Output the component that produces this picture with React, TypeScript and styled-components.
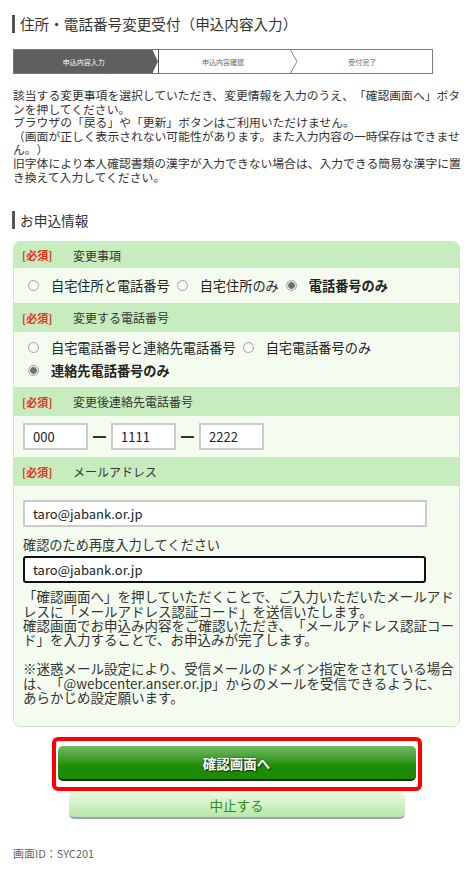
import React from "react";
import styled, { createGlobalStyle } from "styled-components";

const FONT = `"Noto Sans CJK JP", "Noto Sans", sans-serif`;

const GlobalStyle = createGlobalStyle`
  html, body {
    margin: 0;
    padding: 0;
    background: #fff;
  }
  body {
    font-family: ${FONT};
    color: #333;
    text-spacing-trim: space-all;
  }
`;

const Page = styled.div`
  width: 472px;
  box-sizing: border-box;
  padding: 14px 12px 20px 13px;
`;

const Heading = styled.h1<{ $size: number }>`
  margin: 0;
  display: flex;
  align-items: center;
  height: 20px;
  font-size: ${(p) => p.$size}px;
  font-weight: normal;
  color: #333;
  line-height: 20px;

  &::before {
    content: "";
    width: 3px;
    height: 18px;
    margin: 0 5px 0 -1px;
    background: #555;
  }
`;

const Stepper = styled.ol`
  display: flex;
  margin: 15px 0 0;
  padding: 0;
  list-style: none;
  width: 420px;
  height: 25px;
  box-sizing: border-box;
  border: 1px solid #7a7a7a;
`;

const Step = styled.li<{ $active?: boolean }>`
  flex: 1;
  position: relative;
  display: flex;
  align-items: center;
  justify-content: center;
  font-size: 7px;
  color: ${(p) => (p.$active ? "#fff" : "#666")};
  background: ${(p) => (p.$active ? "#5f5f5f" : "#fff")};
`;

const Chevron = styled.svg`
  position: absolute;
  right: -6px;
  top: -1px;
  z-index: 1;
`;

const Intro = styled.div`
  margin: 14px -4px 0 0;
  font-size: 11.8px;
  line-height: 13.6px;
  color: #333;

  p {
    margin: 0;
  }
`;

const SectionHeading = styled(Heading)`
  margin-top: 27px;
`;

const FormBox = styled.div`
  margin-top: 11px;
  border: 1px solid #c5eabd;
  border-radius: 7px;
  overflow: hidden;
  background: #f4fcf0;
`;

const FieldHeader = styled.div<{ $h: number }>`
  display: flex;
  align-items: center;
  height: ${(p) => p.$h}px;
  padding-left: 8px;
  background: #c7edbf;
  font-size: 12px;
  color: #333;
`;

const Required = styled.span`
  width: 51px;
  color: #e4341a;
  font-weight: bold;
  font-size: 11px;
`;

const FieldBody = styled.div<{ $pad: string }>`
  padding: ${(p) => p.$pad};
  background: #f4fcf0;
`;

const RadioGroup = styled.div`
  display: flex;
  flex-wrap: wrap;
  column-gap: 7px;
`;

const RadioOption = styled.label<{ $checked?: boolean }>`
  display: flex;
  align-items: center;
  gap: 12px;
  height: 23px;
  font-size: 13.2px;
  font-weight: ${(p) => (p.$checked ? "bold" : "normal")};
  color: #222;
`;

const Radio = styled.span<{ $checked?: boolean }>`
  width: 11px;
  height: 11px;
  box-sizing: border-box;
  border-radius: 50%;
  border: 1px solid #a5a5a5;
  background: ${(p) =>
    p.$checked
      ? "radial-gradient(circle, #707070 0 3px, #e4e4e4 3.6px)"
      : "linear-gradient(#f4f4f4, #fff)"};
`;

const PhoneRow = styled.div`
  display: flex;
  align-items: center;
  gap: 5px;
`;

const TextInput = styled.input<{ $w: number; $focus?: boolean }>`
  width: ${(p) => p.$w}px;
  height: 27px;
  box-sizing: border-box;
  padding: 0 0 0 8px;
  border: 2px solid ${(p) => (p.$focus ? "#111" : "#cbcbcb")};
  border-radius: ${(p) => (p.$focus ? "3px" : "0")};
  background: #fff;
  font-family: ${FONT};
  font-size: 13px;
  color: #222;
  outline: none;
`;

const Dash = styled.span`
  width: 13px;
  height: 2px;
  background: #333;
`;

const SubLabel = styled.div`
  margin: 9px 0 2px;
  font-size: 13.2px;
  line-height: 18px;
  color: #333;
`;

const Notes = styled.div`
  margin-top: 6px;
  font-size: 13.5px;
  line-height: 14.4px;
  color: #333;

  p {
    margin: 0;
  }
`;

const Actions = styled.div`
  display: flex;
  flex-direction: column;
  align-items: center;
  margin-top: 10px;
`;

const Highlight = styled.div`
  padding: 5px 2px 6px;
  border: 4px solid #ff0000;
  border-radius: 6px;
`;

const PrimaryButton = styled.button`
  display: block;
  width: 358px;
  height: 35px;
  border: 0;
  border-bottom: 2px solid #0b3300;
  border-radius: 5px;
  background: linear-gradient(#72b967 0%, #3f9d2a 40%, #1f8d07 60%, #1c8a03 100%);
  color: #fff;
  font-family: ${FONT};
  font-size: 13.5px;
  font-weight: bold;
  text-shadow: 0 0 2px #124500, 1px 1px 1px #0c3000;
  cursor: pointer;
`;

const SecondaryButton = styled.button`
  display: block;
  width: 336px;
  height: 27px;
  margin-top: 1px;
  border: 0;
  border-bottom: 2px solid #9aa6b8;
  border-radius: 5px;
  background: linear-gradient(#e9f9e4, #c6edb9 70%, #b8e7aa);
  color: #2d8a20;
  font-family: ${FONT};
  font-size: 13.5px;
  cursor: pointer;
`;

const ScreenId = styled.div`
  margin-top: 26px;
  font-size: 11px;
  color: #666;
`;

const App: React.FC = () => {
  return (
    <Page>
      <GlobalStyle />
      <Heading $size={14.6}>住所・電話番号変更受付（申込内容入力）</Heading>

      <Stepper>
        <Step $active>
          申込内容入力
          <Chevron width="7" height="25" viewBox="0 0 7 25">
            <polygon points="0,0 6,12.5 0,25" fill="#5f5f5f" />
            <line x1="6.5" y1="0" x2="6.5" y2="25" stroke="#555" strokeWidth="1" />
          </Chevron>
        </Step>
        <Step>
          申込内容確認
          <Chevron width="9" height="25" viewBox="0 0 9 25">
            <polyline points="0,0 7,12.5 0,25" fill="#fff" stroke="#888" strokeWidth="1" />
          </Chevron>
        </Step>
        <Step>受付完了</Step>
      </Stepper>

      <Intro>
        <p>
          該当する変更事項を選択していただき、変更情報を入力のうえ、「確認画面へ」ボタンを押してください。
        </p>
        <p>ブラウザの「戻る」や「更新」ボタンはご利用いただけません。</p>
        <p>（画面が正しく表示されない可能性があります。また入力内容の一時保存はできません。）</p>
        <p>
          旧字体により本人確認書類の漢字が入力できない場合は、入力できる簡易な漢字に置き換えて入力してください。
        </p>
      </Intro>

      <SectionHeading $size={13.7}>お申込情報</SectionHeading>

      <FormBox>
        <FieldHeader $h={26}>
          <Required>[必須]</Required>変更事項
        </FieldHeader>
        <FieldBody $pad="6px 0 6px 14px">
          <RadioGroup>
            <RadioOption>
              <Radio />
              自宅住所と電話番号
            </RadioOption>
            <RadioOption>
              <Radio />
              自宅住所のみ
            </RadioOption>
            <RadioOption $checked>
              <Radio $checked />
              電話番号のみ
            </RadioOption>
          </RadioGroup>
        </FieldBody>

        <FieldHeader $h={29}>
          <Required>[必須]</Required>変更する電話番号
        </FieldHeader>
        <FieldBody $pad="4px 0 5px 14px">
          <RadioGroup>
            <RadioOption>
              <Radio />
              自宅電話番号と連絡先電話番号
            </RadioOption>
            <RadioOption>
              <Radio />
              自宅電話番号のみ
            </RadioOption>
            <RadioOption $checked>
              <Radio $checked />
              連絡先電話番号のみ
            </RadioOption>
          </RadioGroup>
        </FieldBody>

        <FieldHeader $h={29}>
          <Required>[必須]</Required>変更後連絡先電話番号
        </FieldHeader>
        <FieldBody $pad="7px 0 7px 9px">
          <PhoneRow>
            <TextInput $w={65} defaultValue="000" />
            <Dash />
            <TextInput $w={65} defaultValue="1111" />
            <Dash />
            <TextInput $w={65} defaultValue="2222" />
          </PhoneRow>
        </FieldBody>

        <FieldHeader $h={29}>
          <Required>[必須]</Required>メールアドレス
        </FieldHeader>
        <FieldBody $pad="14px 0 22px 9px">
          <TextInput $w={404} defaultValue="taro@jabank.or.jp" />
          <SubLabel>確認のため再度入力してください</SubLabel>
          <TextInput $w={403} $focus defaultValue="taro@jabank.or.jp" />
          <Notes>
            <p>
              「確認画面へ」を押していただくことで、ご入力いただいたメールアド
              <br />
              レスに「メールアドレス認証コード」を送信いたします。
            </p>
            <p>
              確認画面でお申込み内容をご確認いただき、「メールアドレス認証コー
              <br />
              ド」を入力することで、お申込みが完了します。
            </p>
            <p>&nbsp;</p>
            <p>
              ※迷惑メール設定により、受信メールのドメイン指定をされている場合
              <br />
              は、「@webcenter.anser.or.jp」からのメールを受信できるように、
              <br />
              あらかじめ設定願います。
            </p>
          </Notes>
        </FieldBody>
      </FormBox>

      <Actions>
        <Highlight>
          <PrimaryButton type="button">確認画面へ</PrimaryButton>
        </Highlight>
        <SecondaryButton type="button">中止する</SecondaryButton>
      </Actions>

      <ScreenId>画面ID：SYC201</ScreenId>
    </Page>
  );
};

export default App;
